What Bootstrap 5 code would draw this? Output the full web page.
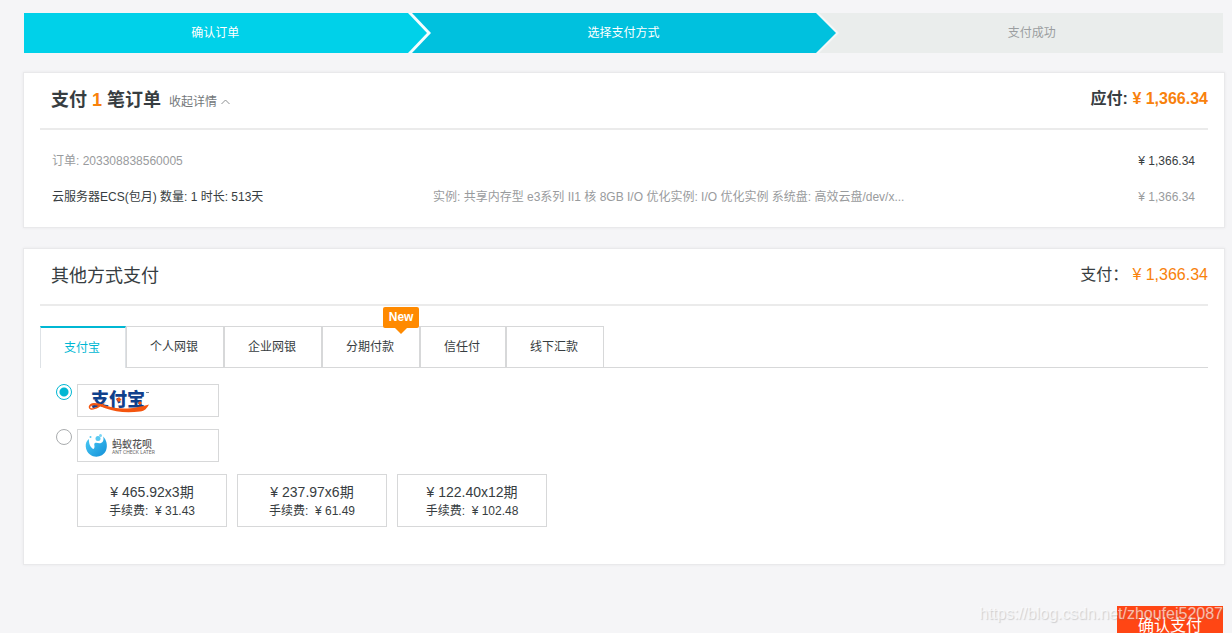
<!DOCTYPE html>
<html lang="zh-CN">
<head>
<meta charset="utf-8">
<meta name="viewport" content="width=device-width, initial-scale=1">
<title>支付</title>
<link href="https://cdn.jsdelivr.net/npm/bootstrap@5.3.0/dist/css/bootstrap.min.css" rel="stylesheet">
<style>
  body {
    background: #f5f5f7;
    color: #373d41;
    font-family: "Liberation Sans", "Noto Sans CJK SC", sans-serif;
    font-size: 12px;
    line-height: 18px;
  }
  .page { padding: 13px 7px 0 23px; }

  /* progress steps */
  .steps { height: 40px; margin: 0 2px 19px 1px; }
  .step-body { flex: 1 1 0; color: #fff; }
  .step-done { background: #00d1e9; }
  .step-now { background: #00c1de; }
  .step-next { background: #eaedec; color: #9b9ea0; }

  /* panels */
  .panel {
    background: #fff;
    border: 1px solid #e9e9eb;
    box-shadow: 0 0 3px rgba(0, 0, 0, .06);
    padding: 0 16px;
  }
  .panel-head { height: 57px; border-bottom: 2px solid #ebebeb; padding-left: 11px; }
  .panel-title { font-size: 18px; line-height: 24px; }
  .panel-sum { font-size: 16px; line-height: 24px; padding-bottom: 4px; }
  .head-main { padding-bottom: 2px; }
  .orange { color: #f8810c; }
  .muted { color: #999b9d; }
  .fold-link { color: #73777a; }
  .order-list { padding: 13px 13px 12px 12px; }
  .order-list .row { height: 36px; }
  .panel-gap { margin-top: 20px; }

  /* payment tabs */
  .pay-tabs { --bs-nav-tabs-border-width: 0; margin-top: 20px; box-shadow: inset 0 -1px #d7d8d9; }
  .pay-tabs .nav-link {
    height: 42px;
    margin: 0;
    padding: 0 25px 0 23px;
    border: 1px solid #d7d8d9;
    border-radius: 0;
    color: #373d41;
    background: #fff;
  }
  .pay-tabs .nav-link.active {
    border-top: 2px solid #00b7d3;
    border-bottom: 0;
    padding-bottom: 1px;
    color: #00b7d3;
  }
  .new-tip {
    position: absolute;
    top: -19px;
    right: 1px;
    width: 36px;
    height: 21px;
    line-height: 20px;
    border-radius: 2px;
    background: #ff8a00;
    color: #fff;
    font-weight: 700;
    text-align: center;
  }
  .new-tip::after {
    content: "";
    position: absolute;
    top: 100%;
    left: 12px;
    border: 6px solid transparent;
    border-top-color: #ff8a00;
    border-bottom: 0;
  }

  /* channels */
  .channels { padding: 16px 16px 37px; gap: 12px; }
  .channel { gap: 5px; }
  .channel .form-check-input {
    width: 16px;
    height: 16px;
    margin: 0;
    border: 1px solid #a9acae;
    box-shadow: none;
  }
  .channel .form-check-input:checked {
    border-color: #00b7d3;
    background: radial-gradient(circle, #00b7d3 4px, #fff 5px);
  }
  .logo-box { width: 142px; height: 33px; border: 1px solid #d7d8d9; }
  .plans { gap: 10px; padding-left: 21px; }
  .plan {
    width: 150px;
    height: 53px;
    padding: 0;
    border: 1px solid #d7d8d9;
    border-radius: 0;
    background: #fff;
    color: #373d41;
    font-size: 12px;
    line-height: 18px;
  }
  .plan-price { font-size: 14px; line-height: 20px; }

  /* bottom bar */
  .pay-bar { margin: 41px 2px 0 0; }
  .pay-btn {
    padding: 0 21px;
    height: 40px;
    border: 0;
    border-radius: 0;
    background: #ff4614;
    color: #fff;
    font-size: 16px;
  }
  .stamp {
    position: absolute;
    bottom: 100%;
    right: 0;
    margin-bottom: -17px;
    font-size: 16px;
    color: rgba(255, 255, 255, .65);
    text-shadow: 1px 1px 1px rgba(120, 120, 120, .3);
    pointer-events: none;
  }
</style>
</head>
<body>
<main class="page">

  <div class="steps d-flex">
    <div class="step-body step-done d-flex align-items-center justify-content-center">确认订单</div>
    <svg class="flex-shrink-0" width="26" height="40" viewBox="0 0 26 40" aria-hidden="true">
      <path fill="#00c1de" d="M0 0h26v40H0z"/><path fill="#f5fdff" d="M0 0h6l19 20L6 40H0z"/><path fill="#00d1e9" d="M0 0h2l19 20L2 40H0z"/>
    </svg>
    <div class="step-body step-now d-flex align-items-center justify-content-center">选择支付方式</div>
    <svg class="flex-shrink-0" width="26" height="40" viewBox="0 0 26 40" aria-hidden="true">
      <path fill="#eaedec" d="M0 0h26v40H0z"/><path fill="#f4f8f8" d="M0 0h4l20 20L4 40H0z"/><path fill="#00c1de" d="M0 0h1l20 20L1 40H0z"/>
    </svg>
    <div class="step-body step-next d-flex align-items-center justify-content-center">支付成功</div>
  </div>

  <section class="panel">
    <div class="panel-head d-flex align-items-center justify-content-between">
      <div class="head-main d-flex align-items-center gap-2">
        <h1 class="panel-title fw-bold m-0">支付 <span class="orange">1</span> 笔订单</h1>
        <a href="#orders" class="fold-link text-decoration-none d-flex align-items-center gap-1 pt-1">收起详情
          <svg width="9" height="6" viewBox="0 0 9 6" fill="none" stroke="#8d9092" aria-hidden="true"><path d="M.5 5l4-4 4 4"/></svg>
        </a>
      </div>
      <div class="panel-sum fw-bold">应付: <span class="orange">¥ 1,366.34</span></div>
    </div>
    <div class="order-list" id="orders">
      <div class="row g-0 align-items-center">
        <div class="col-9 muted">订单: 203308838560005</div>
        <div class="col-3 text-end">¥ 1,366.34</div>
      </div>
      <div class="row g-0 align-items-center">
        <div class="col-4">云服务器ECS(包月) 数量: 1 时长: 513天</div>
        <div class="col-5 muted text-nowrap">实例: 共享内存型 e3系列 II1 核 8GB I/O 优化实例: I/O 优化实例 系统盘: 高效云盘/dev/x...</div>
        <div class="col-3 text-end muted">¥ 1,366.34</div>
      </div>
    </div>
  </section>

  <section class="panel panel-gap">
    <div class="panel-head d-flex align-items-center justify-content-between">
      <h2 class="panel-title head-main fw-normal m-0">其他方式支付</h2>
      <div class="panel-sum d-flex gap-1"><span>支付：</span><span class="orange">¥ 1,366.34</span></div>
    </div>

    <ul class="nav nav-tabs pay-tabs">
      <li class="nav-item"><button type="button" class="nav-link active">支付宝</button></li>
      <li class="nav-item"><button type="button" class="nav-link">个人网银</button></li>
      <li class="nav-item"><button type="button" class="nav-link">企业网银</button></li>
      <li class="nav-item position-relative"><button type="button" class="nav-link">分期付款</button><span class="new-tip">New</span></li>
      <li class="nav-item"><button type="button" class="nav-link">信任付</button></li>
      <li class="nav-item"><button type="button" class="nav-link">线下汇款</button></li>
    </ul>

    <div class="channels d-flex flex-column">
      <div class="channel d-flex align-items-start">
        <input class="form-check-input" type="radio" name="channel" id="ch-alipay" checked>
        <label class="logo-box" for="ch-alipay">
          <svg class="d-block" width="140" height="31" viewBox="0 0 140 31" role="img" aria-label="支付宝">
            <text x="13" y="21" font-size="18" font-weight="900" fill="#10408c" font-family="Noto Sans CJK SC, sans-serif">支付宝</text>
            <path d="M28 17C23 22 16 25.500 12.500 24.500C9 23 11 18 16 18C24 18 31 23.500 46 23.500C55 23.500 61 22 71 19.500C69 23 67 26 62 26.500C49 28 37 27 28 23.500C21 20.500 15 19 12.500 21.500C11.500 23.500 14 24 17 22.500C20 21.500 23 19.500 28 17Z" fill="#f4550f"/>
            <path d="M41 12l2.500 2.500L41 17l-2.500-2.500zM62 16l2 2-2 2-2-2z" fill="#f4550f"/>
            <path d="M68 7.500h3" stroke="#7b8899"/>
          </svg>
        </label>
      </div>
      <div class="channel d-flex align-items-start">
        <input class="form-check-input" type="radio" name="channel" id="ch-huabei">
        <label class="logo-box" for="ch-huabei">
          <svg class="d-block" width="140" height="31" viewBox="0 0 140 31" role="img" aria-label="蚂蚁花呗">
            <defs><linearGradient id="drop" x1="0" y1="0" x2="1" y2="1"><stop offset="0" stop-color="#4cccf5"/><stop offset="1" stop-color="#128fd8"/></linearGradient></defs>
            <path d="M11 9C6 12 7 21 12 24.500C17 28.500 25 27 28 20.500C30 15.500 28.500 9.500 25 6.500C26 9 25.500 12 23 13C20.500 14 19 12 17 13C15 14 18 17 15.500 19C12.500 18 10.500 13 11 9Z" fill="url(#drop)"/>
            <circle cx="20" cy="8.500" r="2.500" fill="#58c9f1"/><circle cx="22.500" cy="5.500" r="1.500" fill="#7ad5f5"/><circle cx="12.500" cy="7" r="1" fill="#58c9f1"/>
            <text x="34" y="18" font-size="10" font-weight="500" fill="#555" font-family="Noto Sans CJK SC, sans-serif">蚂蚁花呗</text>
            <text x="34" y="24" font-size="5" font-weight="400" fill="#666" font-family="Roboto, sans-serif">ANT CHECK LATER</text>
          </svg>
        </label>
      </div>
      <div class="plans d-flex">
        <button type="button" class="btn plan"><span class="plan-price d-block">¥ 465.92x3期</span>手续费:&nbsp; ¥ 31.43</button>
        <button type="button" class="btn plan"><span class="plan-price d-block">¥ 237.97x6期</span>手续费:&nbsp; ¥ 61.49</button>
        <button type="button" class="btn plan"><span class="plan-price d-block">¥ 122.40x12期</span>手续费:&nbsp; ¥ 102.48</button>
      </div>
    </div>
  </section>

  <div class="pay-bar d-flex justify-content-end position-relative">
    <button type="submit" class="btn pay-btn">确认支付</button>
    <span class="stamp">https://blog.csdn.net/zhoufei52087</span>
  </div>
</main>
<script src="https://cdn.jsdelivr.net/npm/bootstrap@5.3.0/dist/js/bootstrap.bundle.min.js"></script>
</body>
</html>
